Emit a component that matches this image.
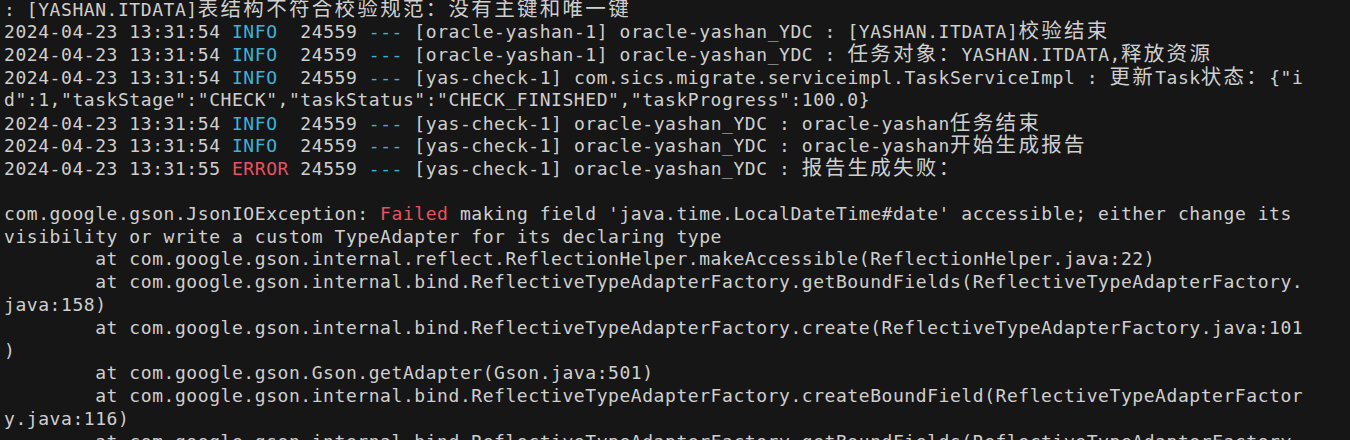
import React from 'react';

type Seg = { text: string; tone?: 'info' | 'error' | 'red' };

const CJK = /([\u3000-\u303f\u3400-\u9fff\uff00-\uffef]+)/;

// terminal cells: ascii = 1 column, CJK / fullwidth = 2 columns
const Cells: React.FC<{ text: string }> = ({ text }) => (
  <>
    {text.split(CJK).map((part, i) =>
      CJK.test(part) ? (
        <span key={i} className="text-[20.5px] leading-[22.8px] tracking-[2.3px]">
          {part}
        </span>
      ) : (
        <React.Fragment key={i}>{part}</React.Fragment>
      )
    )}
  </>
);

const toneClass = {
  info: 'text-[#3bb2da]',
  error: 'text-[#e5535f]',
  red: 'text-[#e5535f]',
};

const log = (sec: string, level: 'INFO' | 'ERROR', rest: string): Seg[] => [
  { text: `2024-04-23 13:31:${sec} ` },
  { text: level, tone: level === 'INFO' ? 'info' : 'error' },
  { text: level === 'INFO' ? '  24559 ' : ' 24559 ' },
  { text: '---', tone: 'info' },
  { text: ' ' + rest },
];

const lines: Seg[][] = [
  [{ text: ': [YASHAN.ITDATA]表结构不符合校验规范：没有主键和唯一键' }],
  log('54', 'INFO', '[oracle-yashan-1] oracle-yashan_YDC : [YASHAN.ITDATA]校验结束'),
  log('54', 'INFO', '[oracle-yashan-1] oracle-yashan_YDC : 任务对象：YASHAN.ITDATA,释放资源'),
  log('54', 'INFO', '[yas-check-1] com.sics.migrate.serviceimpl.TaskServiceImpl : 更新Task状态：{"i'),
  [{ text: 'd":1,"taskStage":"CHECK","taskStatus":"CHECK_FINISHED","taskProgress":100.0}' }],
  log('54', 'INFO', '[yas-check-1] oracle-yashan_YDC : oracle-yashan任务结束'),
  log('54', 'INFO', '[yas-check-1] oracle-yashan_YDC : oracle-yashan开始生成报告'),
  log('55', 'ERROR', '[yas-check-1] oracle-yashan_YDC : 报告生成失败：'),
  [],
  [
    { text: 'com.google.gson.JsonIOException: ' },
    { text: 'Failed', tone: 'red' },
    { text: " making field 'java.time.LocalDateTime#date' accessible; either change its" },
  ],
  [{ text: 'visibility or write a custom TypeAdapter for its declaring type' }],
  [{ text: '        at com.google.gson.internal.reflect.ReflectionHelper.makeAccessible(ReflectionHelper.java:22)' }],
  [{ text: '        at com.google.gson.internal.bind.ReflectiveTypeAdapterFactory.getBoundFields(ReflectiveTypeAdapterFactory.' }],
  [{ text: 'java:158)' }],
  [{ text: '        at com.google.gson.internal.bind.ReflectiveTypeAdapterFactory.create(ReflectiveTypeAdapterFactory.java:101' }],
  [{ text: ')' }],
  [{ text: '        at com.google.gson.Gson.getAdapter(Gson.java:501)' }],
  [{ text: '        at com.google.gson.internal.bind.ReflectiveTypeAdapterFactory.createBoundField(ReflectiveTypeAdapterFactor' }],
  [{ text: 'y.java:116)' }],
  [{ text: '        at com.google.gson.internal.bind.ReflectiveTypeAdapterFactory.getBoundFields(ReflectiveTypeAdapterFactory.' }],
];

export default function App() {
  return (
    <div className="h-[440px] w-[1350px] overflow-hidden bg-[#161616]">
      <div className="mt-[-2.4px] pl-[4px] font-['DejaVu_Sans_Mono','Noto_Sans_CJK_SC',monospace] text-[18px] leading-[22.8px] tracking-[0.56px] text-[#cfcfcf]">
        {lines.map((segs, i) => (
          <div key={i} className="h-[22.8px] overflow-visible whitespace-pre">
            {segs.map((s, j) =>
              s.tone ? (
                <span key={j} className={toneClass[s.tone]}>
                  <Cells text={s.text} />
                </span>
              ) : (
                <Cells key={j} text={s.text} />
              )
            )}
          </div>
        ))}
      </div>
    </div>
  );
}
